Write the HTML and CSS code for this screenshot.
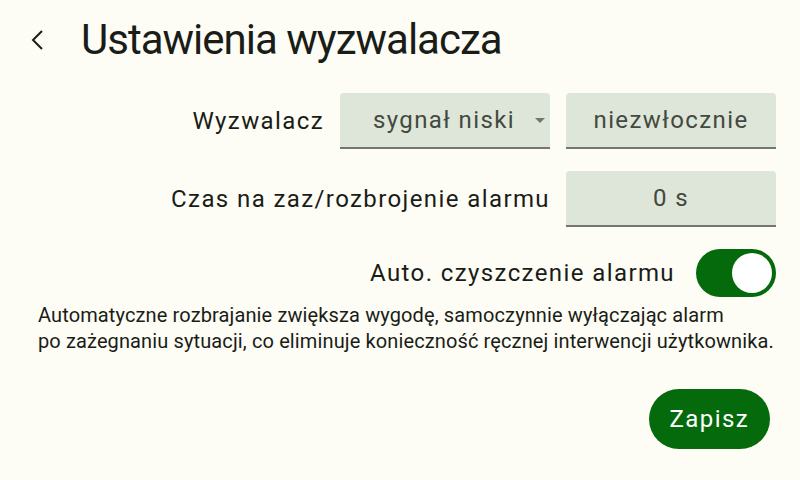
FILE: index.html
```html
<!DOCTYPE html>
<html lang="pl">
<head>
<meta charset="utf-8">
<title>Ustawienia wyzwalacza</title>
<link rel="stylesheet" href="styles.css">
</head>
<body>
<div class="screen">
  <header class="topbar">
    <button class="back" aria-label="Wstecz">
      <svg width="16" height="22" viewBox="0 0 16 22"><path d="M12 2 L3 11 L12 20" fill="none" stroke="#1a1c18" stroke-width="2"/></svg>
    </button>
    <h1 class="title">Ustawienia wyzwalacza</h1>
  </header>

  <main class="form">
    <div class="row">
      <span class="label">Wyzwalacz</span>
      <div class="field select">
        <span>sygnał niski</span>
        <svg class="caret" width="10" height="5" viewBox="0 0 10 5"><path d="M0 0 H10 L5 5 Z" fill="#72786f"/></svg>
      </div>
      <div class="field">niezwłocznie</div>
    </div>

    <div class="row">
      <span class="label">Czas na zaz/rozbrojenie alarmu</span>
      <div class="field">0 s</div>
    </div>

    <div class="row row-switch">
      <span class="label">Auto. czyszczenie alarmu</span>
      <div class="switch on"><span class="thumb"></span></div>
    </div>

    <p class="hint">Automatyczne rozbrajanie zwiększa wygodę, samoczynnie wyłączając alarm<br>po zażegnaniu sytuacji, co eliminuje konieczność ręcznej interwencji użytkownika.</p>

    <div class="actions">
      <button class="save">Zapisz</button>
    </div>
  </main>
</div>
</body>
</html>
```

FILE: styles.css
```css
html, body {
  margin: 0;
  padding: 0;
  background: #fdfdf5;
}

body {
  font-family: Roboto, "Noto Sans", sans-serif;
  color: #1a1c18;
}

.screen {
  width: 800px;
  height: 480px;
  box-sizing: border-box;
  overflow: hidden;
}

.topbar {
  display: flex;
  align-items: center;
  height: 80px;
  padding: 0 24px 0 30px;
  box-sizing: border-box;
}

.back {
  width: 16px;
  height: 22px;
  padding: 0;
  border: 0;
  background: none;
  display: flex;
  margin-right: 35px;
}

.title {
  margin: 0;
  font-size: 42px;
  font-weight: 400;
  letter-spacing: -1px;
  line-height: 1;
}

.form {
  padding: 13px 24px 0 24px;
}

.row {
  display: flex;
  justify-content: flex-end;
  align-items: center;
  gap: 16px;
  margin-bottom: 22px;
}

.label {
  font-size: 24px;
  letter-spacing: 1.4px;
}

.field {
  width: 210px;
  height: 56px;
  box-sizing: border-box;
  background: #dee5d9;
  border-radius: 4px 4px 0 0;
  border-bottom: 2px solid #72786f;
  display: flex;
  align-items: center;
  justify-content: center;
  font-size: 24px;
  letter-spacing: 1.4px;
  color: #42493f;
}

.select {
  position: relative;
  padding-right: 2px;
}

.select .caret {
  position: absolute;
  right: 5px;
  top: 25px;
}

.row-switch {
  gap: 21px;
  margin-bottom: 0;
}

.switch {
  width: 80px;
  height: 48px;
  border-radius: 24px;
  background: #046a0c;
  position: relative;
}

.switch .thumb {
  position: absolute;
  right: 4px;
  top: 4px;
  width: 40px;
  height: 40px;
  border-radius: 50%;
  background: #ffffff;
}

.hint {
  margin: 5px 0 0 14px;
  font-size: 20px;
  font-stretch: 90%;
  letter-spacing: 0.12px;
  line-height: 26px;
}

.actions {
  display: flex;
  justify-content: flex-end;
  margin-top: 35px;
  padding-right: 6px;
}

.save {
  height: 60px;
  padding: 0 21px;
  border: 0;
  border-radius: 30px;
  background: #046a0c;
  color: #ffffff;
  font-family: Roboto, sans-serif;
  font-size: 24px;
  letter-spacing: 1.4px;
}
```
